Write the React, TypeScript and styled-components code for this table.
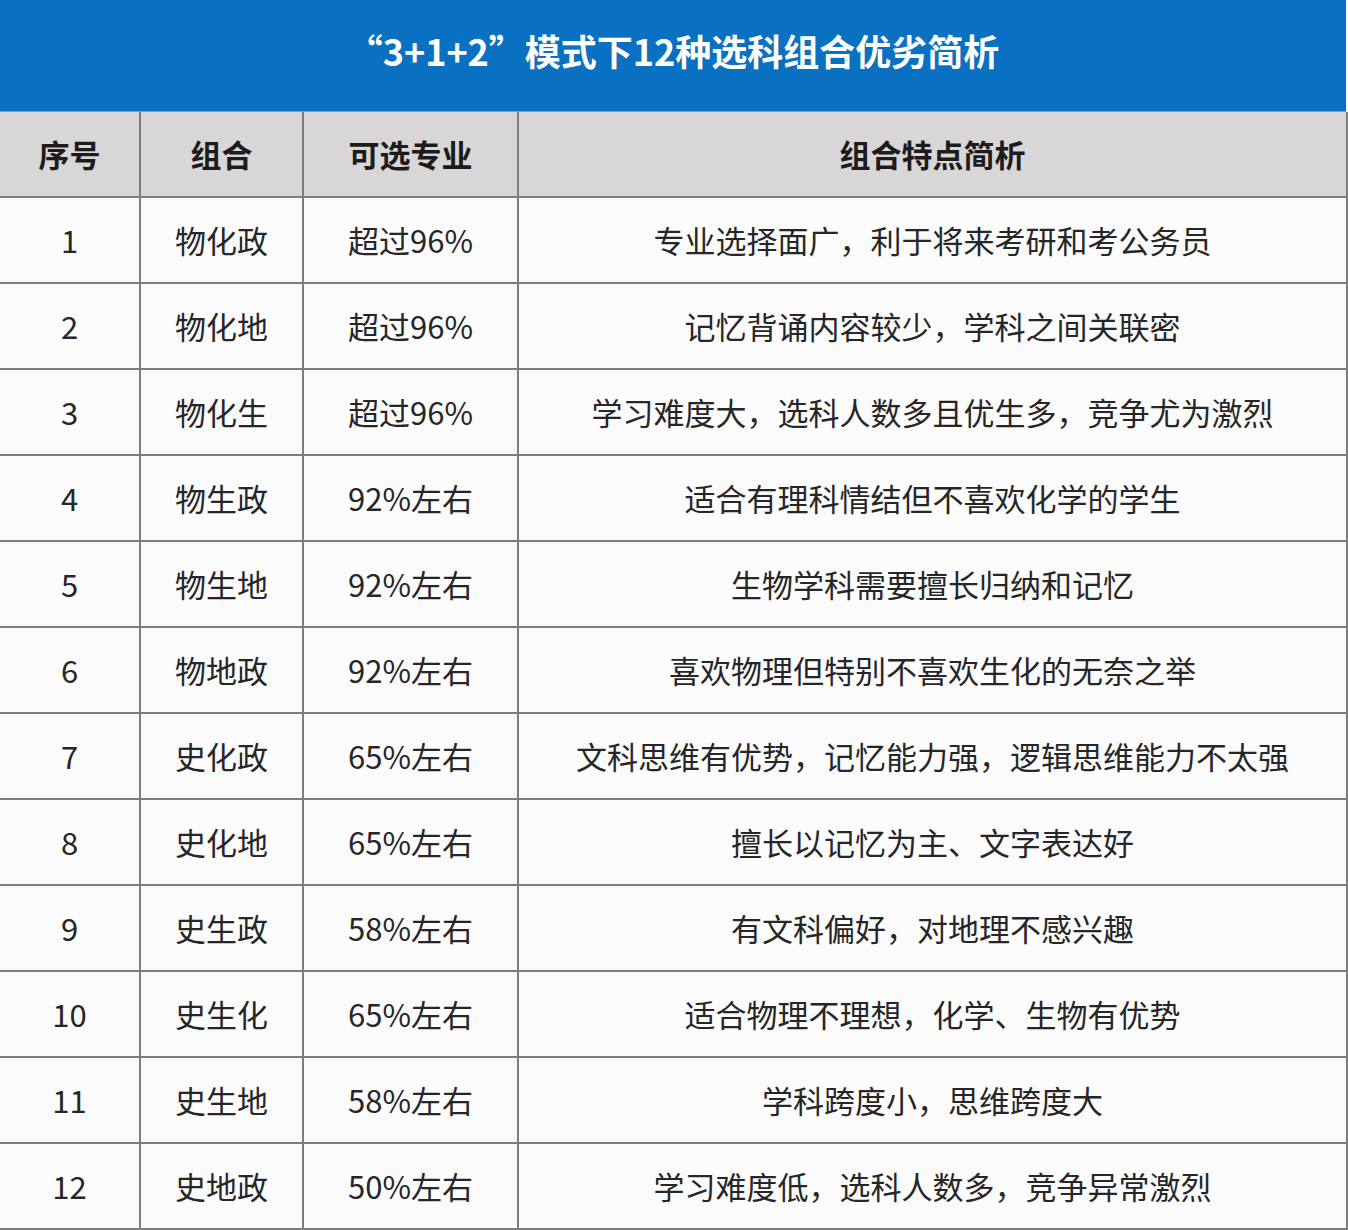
import styled, { createGlobalStyle } from "styled-components";

const GlobalStyle = createGlobalStyle`
    body {
        margin: 0;
        background: #ffffff;
        font-family: "Noto Sans CJK SC", "Noto Sans", sans-serif;
    }
`;

const Page = styled.div`
    width: 1348px;
    overflow: hidden;
`;

const TitleBar = styled.div`
    height: 112px;
    width: 1346px;
    background-color: #0a70c1;
    border-bottom: 1px solid #8a98a8;
    display: flex;
    align-items: center;
    justify-content: center;
    padding-bottom: 12px;
    box-sizing: border-box;
`;

const Title = styled.h1`
    margin: 0;
    color: #ffffff;
    font-size: 36px;
    font-weight: 700;
`;

/* the grid background shows through the gaps as the cell lines */
const Grid = styled.div`
    display: grid;
    grid-template-columns: 139px 161px 213px 827px;
    grid-auto-rows: 84px;
    column-gap: 2px;
    row-gap: 2px;
    padding-right: 2px;
    padding-bottom: 2px;
    background-color: #7d7d7d;
`;

const Cell = styled.div<{ $head?: boolean }>`
    display: flex;
    align-items: center;
    justify-content: center;
    background-color: ${(p) => (p.$head ? "#d8d6d6" : "#fbfbfc")};
    color: ${(p) => (p.$head ? "#1c1c1c" : "#262626")};
    font-size: 31px;
    font-weight: ${(p) => (p.$head ? 700 : 400)};
    white-space: nowrap;
    padding-bottom: 2px;
`;

const rows: [string, string, string, string][] = [
    ["1", "物化政", "超过96%", "专业选择面广，利于将来考研和考公务员"],
    ["2", "物化地", "超过96%", "记忆背诵内容较少，学科之间关联密"],
    ["3", "物化生", "超过96%", "学习难度大，选科人数多且优生多，竞争尤为激烈"],
    ["4", "物生政", "92%左右", "适合有理科情结但不喜欢化学的学生"],
    ["5", "物生地", "92%左右", "生物学科需要擅长归纳和记忆"],
    ["6", "物地政", "92%左右", "喜欢物理但特别不喜欢生化的无奈之举"],
    ["7", "史化政", "65%左右", "文科思维有优势，记忆能力强，逻辑思维能力不太强"],
    ["8", "史化地", "65%左右", "擅长以记忆为主、文字表达好"],
    ["9", "史生政", "58%左右", "有文科偏好，对地理不感兴趣"],
    ["10", "史生化", "65%左右", "适合物理不理想，化学、生物有优势"],
    ["11", "史生地", "58%左右", "学科跨度小，思维跨度大"],
    ["12", "史地政", "50%左右", "学习难度低，选科人数多，竞争异常激烈"],
];

const headers = ["序号", "组合", "可选专业", "组合特点简析"];

export default function App() {
    return (
        <>
            <GlobalStyle />
            <Page>
                <TitleBar>
                    <Title>“3+1+2”模式下12种选科组合优劣简析</Title>
                </TitleBar>
                <Grid>
                    {headers.map((h) => (
                        <Cell $head key={h}>{h}</Cell>
                    ))}
                    {rows.map((r) =>
                        r.map((text, i) => <Cell key={r[0] + "-" + i}>{text}</Cell>)
                    )}
                </Grid>
            </Page>
        </>
    );
}
